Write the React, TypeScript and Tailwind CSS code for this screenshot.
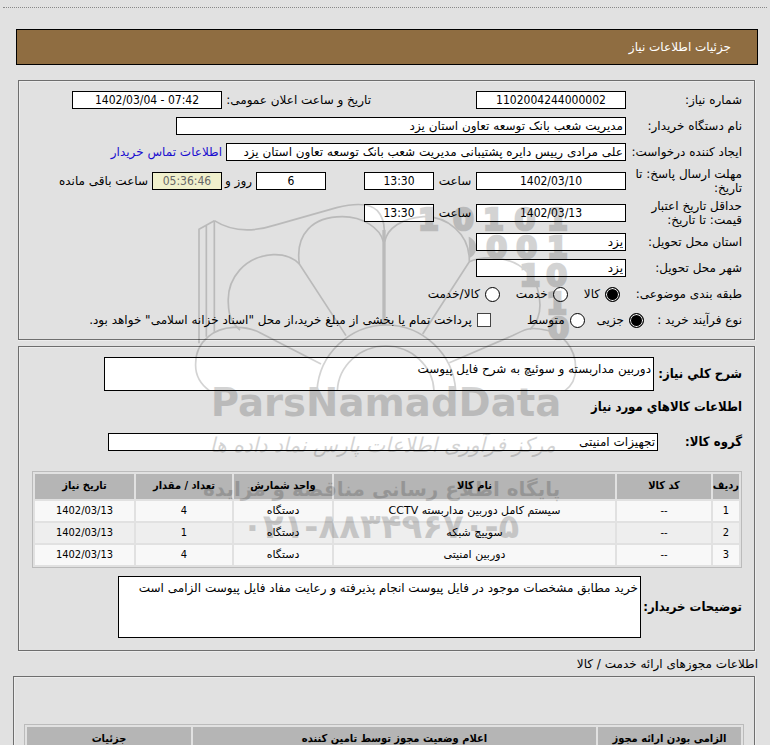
import type { ReactNode } from 'react';

const items = [
  { code: '--', name: 'سیستم کامل دوربین مداربسته CCTV', unit: 'دستگاه', qty: 4, date: '1402/03/13' },
  { code: '--', name: 'سوییچ شبکه', unit: 'دستگاه', qty: 1, date: '1402/03/13' },
  { code: '--', name: 'دوربین امنیتی', unit: 'دستگاه', qty: 4, date: '1402/03/13' },
];

// digits standing behind the flower, one list entry per glyph
const bits = [
  { d: '1', x: 745, y: 121 }, { d: '0', x: 850, y: 121 }, { d: '1', x: 940, y: 121 }, { d: '0', x: 1035, y: 121 }, { d: '1', x: 1132, y: 121 },
  { d: '0', x: 950, y: 205 }, { d: '0', x: 1040, y: 205 }, { d: '1', x: 1132, y: 205 },
  { d: '1', x: 1050, y: 288 }, { d: '0', x: 1130, y: 288 },
  { d: '1', x: 1130, y: 372 },
  { d: '0', x: 1136, y: 447 },
];

const condensed = "font-['DejaVu_Sans_Condensed','DejaVu_Sans',sans-serif]";
const box = 'h-[18px] border border-black bg-white px-[2px] text-xs leading-4 text-black outline-none';
const numBox = `${box} ${condensed} text-center`;
const heading = `${condensed} text-[13px] font-bold`;
const area = 'block resize-none border border-black bg-white px-[2px] py-1 leading-[14px] outline-none';
const th = `${condensed} bg-[#b5b5b5] p-0 text-center text-[11px] font-bold`;
const radio =
  'size-[15px] shrink-0 appearance-none rounded-full border border-black bg-white checked:bg-black checked:shadow-[inset_0_0_0_1px_#fff]';

function Panel({ className, children }: { className: string; children: ReactNode }) {
  return (
    <section className={`border-r border-b border-[#ececec] ${className}`}>
      <div className="border border-[#6e6e6e] shadow-[inset_1px_1px_0_#ececec]">{children}</div>
    </section>
  );
}

interface RowProps {
  label: string;
  htmlFor?: string;
  tall?: boolean;
  children: ReactNode;
}

function Row({ label, htmlFor, tall, children }: RowProps) {
  return (
    <div className={`flex items-center ${tall ? 'h-8' : 'h-[26px]'}`}>
      <label htmlFor={htmlFor} className="w-[116px] shrink-0 leading-[14px]">
        {label}
      </label>
      {children}
    </div>
  );
}

function Choice({ name, label, checked }: { name: string; label: string; checked?: boolean }) {
  return (
    <label className="flex items-center gap-[5px]">
      <input type="radio" name={name} defaultChecked={checked} className={radio} />
      {label}
    </label>
  );
}

function Watermark() {
  return (
    <svg
      viewBox="0 0 1200 1065"
      className="pointer-events-none absolute top-[190px] left-[180px] h-[355px] w-[400px] opacity-[0.17]"
      fill="none"
      stroke="#000"
      strokeWidth="5"
      aria-hidden="true"
    >
      <path d="M57 460V118L103 92M79 440V105M103 425V92" />
      <path d="M103 92C150 122 210 130 290 104L470 53Q560 30 592 62Q612 84 613 120" />
      <path d="M612 120V405" strokeWidth="10" />
      <path d="M498 437L358 222C345 130 400 80 487 80C550 80 600 115 610 155" />
      <path d="M728 432L868 215C870 130 800 78 730 80C665 85 622 115 614 155" />
      <path d="M358 222C340 203 310 193 280 194C195 198 140 265 145 340C146 380 155 398 180 420" />
      <path d="M868 215C890 205 915 203 940 204C1030 208 1080 270 1080 345C1080 375 1070 400 1050 418" />
      <path d="M423 522L240 428C195 405 125 405 85 440C55 465 47 490 47 520C45 555 62 583 88 602" />
      <path d="M808 518L1000 436C1035 418 1050 412 1080 417C1150 425 1187 475 1187 535C1187 568 1172 590 1155 602" />
      <path d="M411 602A210 210 0 0 1 619 405A210 210 0 0 1 827 602" />
      <path d="M472 602A146 140 0 0 1 617 468A146 140 0 0 1 762 602" />
      <path d="M866 140C896 152 896 192 868 204Z" fill="#000" stroke="none" />
      <g fill="#000" stroke="none" direction="ltr" fontFamily="DejaVu Sans, sans-serif">
        <g fontSize="90" fontWeight="700" textAnchor="middle" stroke="#000" strokeWidth="8">
          {bits.map((b, i) => (
            <text key={i} x={b.x} y={b.y}>{b.d}</text>
          ))}
        </g>
        <text x="618" y="677" fontSize="116" fontWeight="700" textAnchor="middle">ParsNamadData</text>
        <text x="608" y="785" fontSize="61" fontStyle="italic" textAnchor="middle">مرکز فرآوری اطلاعات پارس نماد داده ها</text>
        <text x="605" y="918" fontSize="60" fontWeight="700" textAnchor="middle">پایگاه اطلاع رسانی مناقصه و مزایده</text>
        <text x="602" y="1043" fontSize="102" fontWeight="700" textAnchor="middle">۰۲۱-۸۸۳۴۹۶۷۰-۵</text>
      </g>
    </svg>
  );
}

export default function App() {
  return (
    <div
      dir="rtl"
      className="relative min-h-screen overflow-hidden bg-[#e1e1e1] pt-[7px] font-['DejaVu_Sans',sans-serif] text-xs text-black"
    >
      <div className="mx-[3px] border-t border-dotted border-[#888]" />

      <header className="mr-3 ml-4 mt-[21px] flex h-9 items-center border border-black bg-[#8f6d41] pr-[26px] text-white">
        <h1>جزئیات اطلاعات نیاز</h1>
      </header>

      <Panel className="mt-[15px] mr-[14px] ml-[18px]">
        <div className="pt-[6px] pr-3 pb-[6px]">
          <Row label="شماره نیاز:" htmlFor="need-no">
            <input id="need-no" readOnly dir="ltr" defaultValue="1102004244000002" className={`${numBox} w-[150px]`} />
            <label htmlFor="announce" className="mr-[105px] w-[149px] shrink-0 whitespace-nowrap">تاریخ و ساعت اعلان عمومی:</label>
            <input id="announce" readOnly dir="ltr" defaultValue="1402/03/04 - 07:42" className={`${numBox} w-[150px]`} />
          </Row>
          <Row label="نام دستگاه خریدار:" htmlFor="buyer">
            <input id="buyer" readOnly defaultValue="مدیریت شعب بانک توسعه تعاون استان یزد" className={`${box} w-[450px]`} />
          </Row>
          <Row label="ایجاد کننده درخواست:" htmlFor="creator">
            <input id="creator" readOnly defaultValue="علی مرادی رییس دایره پشتیبانی مدیریت شعب بانک توسعه تعاون استان یزد" className={`${box} w-[400px]`} />
            <a href="#contact" className="mr-1 text-[#1a0dcf]">اطلاعات تماس خریدار</a>
          </Row>
          <Row label="مهلت ارسال پاسخ: تا تاریخ:" htmlFor="deadline" tall>
            <input id="deadline" readOnly dir="ltr" defaultValue="1402/03/10" className={`${numBox} w-[150px]`} />
            <label htmlFor="deadline-time" className="w-[42px] text-center">ساعت</label>
            <input id="deadline-time" readOnly dir="ltr" defaultValue="13:30" className={`${numBox} w-[70px]`} />
            <input id="days" readOnly dir="ltr" defaultValue="6" className={`${numBox} mr-[38px] w-[70px]`} />
            <label htmlFor="days" className="w-[34px] pr-1 whitespace-nowrap">روز و</label>
            <input id="remain" readOnly dir="ltr" defaultValue="05:36:46" className={`${condensed} h-[18px] w-[70px] border border-black bg-[#f0f0cc] px-[2px] text-center text-xs leading-4 text-[#666] outline-none`} />
            <label htmlFor="remain" className="mr-1">ساعت باقی مانده</label>
          </Row>
          <Row label="حداقل تاریخ اعتبار قیمت: تا تاریخ:" htmlFor="valid" tall>
            <input id="valid" readOnly dir="ltr" defaultValue="1402/03/13" className={`${numBox} w-[150px]`} />
            <label htmlFor="valid-time" className="w-[42px] text-center">ساعت</label>
            <input id="valid-time" readOnly dir="ltr" defaultValue="13:30" className={`${numBox} w-[70px]`} />
          </Row>
          <Row label="استان محل تحویل:" htmlFor="province">
            <input id="province" readOnly defaultValue="یزد" className={`${box} w-[150px]`} />
          </Row>
          <Row label="شهر محل تحویل:" htmlFor="city">
            <input id="city" readOnly defaultValue="یزد" className={`${box} w-[150px]`} />
          </Row>
          <div className="flex h-[26px] items-center">
            <span className="w-[122px]">طبقه بندی موضوعی:</span>
            <div className="flex gap-4">
              <Choice name="subject" label="کالا" checked />
              <Choice name="subject" label="خدمت" />
              <Choice name="subject" label="کالا/خدمت" />
            </div>
          </div>
          <div className="flex h-[26px] items-center">
            <span className="w-[98px]">نوع فرآیند خرید :</span>
            <div className="flex gap-3">
              <Choice name="process" label="جزیی" checked />
              <Choice name="process" label="متوسط" />
            </div>
            <label className="mr-9 flex items-center gap-[5px] whitespace-nowrap">
              <input type="checkbox" className="size-[14px] shrink-0 appearance-none border border-[#444] bg-white checked:bg-black" />
              پرداخت تمام یا بخشی از مبلغ خرید،از محل "اسناد خزانه اسلامی" خواهد بود.
            </label>
          </div>
        </div>
      </Panel>

      <Panel className="mt-[5px] mr-[14px] ml-[18px]">
        <div className="pt-[10px] pr-3 pb-3">
          <div className="flex items-center">
            <label htmlFor="summary" className={`${heading} w-[88px] shrink-0 whitespace-nowrap`}>شرح کلي نیاز:</label>
            <textarea id="summary" readOnly defaultValue="دوربین مداربسته و سوئیچ به شرح فایل پیوست" className={`${area} h-[34px] w-[550px]`} />
          </div>
          <h2 className={`${heading} mt-2 leading-4`}>اطلاعات کالاهاي مورد نیاز</h2>
          <div className="mt-[18px] flex items-center">
            <label htmlFor="group" className={`${heading} w-[84px] shrink-0 leading-4`}>گروه کالا:</label>
            <input id="group" readOnly defaultValue="تجهیزات امنیتی" className={`${box} w-[550px]`} />
          </div>

          <div className="mt-5 ml-[13px]">
            <table className="w-full table-fixed border-separate border-spacing-[2px] border border-[#bbb] text-[11px]">
              <thead>
                <tr className="h-[25px]">
                  <th className={`${th} w-[26px] whitespace-nowrap`}>ردیف</th>
                  <th className={`${th} w-[94px]`}>کد کالا</th>
                  <th className={th}>نام کالا</th>
                  <th className={`${th} w-[98px]`}>واحد شمارش</th>
                  <th className={`${th} w-[96px]`}>تعداد / مقدار</th>
                  <th className={`${th} w-[99px]`}>تاریخ نیاز</th>
                </tr>
              </thead>
              <tbody>
                {items.map((item, index) => (
                  <tr key={index} className="h-5 bg-[#f8f8f8] text-center leading-4 even:bg-[#eeeeee]">
                    <td className={`${condensed} p-0`}>{index + 1}</td>
                    <td className={`${condensed} p-0`}>{item.code}</td>
                    <td className="p-0">{item.name}</td>
                    <td className="p-0">{item.unit}</td>
                    <td className={`${condensed} p-0`}>{item.qty}</td>
                    <td className={`${condensed} p-0`}>{item.date}</td>
                  </tr>
                ))}
              </tbody>
            </table>
          </div>

          <div className="mt-2 flex items-center">
            <label htmlFor="notes" className={`${heading} w-[101px] shrink-0 whitespace-nowrap`}>توضیحات خریدار:</label>
            <textarea id="notes" readOnly defaultValue="خرید مطابق مشخصات موجود در فایل پیوست انجام پذیرفته و رعایت مفاد فایل پیوست الزامی است" className={`${area} h-[62px] w-[523px]`} />
          </div>
        </div>
      </Panel>

      <h2 className="my-[2px] mr-3 leading-5">اطلاعات مجوزهای ارائه خدمت / کالا</h2>

      <Panel className="mr-[14px] ml-[13px]">
        <div className="px-[10px] pt-[47px] pb-3">
          <table className="w-full table-fixed border-separate border-spacing-[2px] border border-[#bbb]">
            <thead>
              <tr className="h-6">
                <th className={`${th} w-[143px]`}>الزامی بودن ارائه مجوز</th>
                <th className={th}>اعلام وضعیت مجوز توسط تامین کننده</th>
                <th className={`${th} w-[164px]`}>جزئیات</th>
              </tr>
            </thead>
          </table>
        </div>
      </Panel>

      <Watermark />
    </div>
  );
}
